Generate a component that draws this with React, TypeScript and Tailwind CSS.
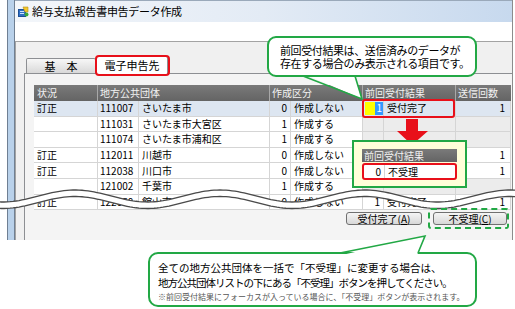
import React from 'react';

const JP = "font-['Noto_Sans_CJK_JP','Noto_Sans',sans-serif]";

type Row = {
  status: string;
  code: string;
  name: string;
  kbn: string;
  kbnLabel: string;
  prev?: string;
  prevLabel?: string;
  count?: string;
  sel?: boolean;
  empty?: boolean;
};

const rows: Row[] = [
  { status: '訂正', code: '111007', name: 'さいたま市', kbn: '0', kbnLabel: '作成しない', prev: '1', prevLabel: '受付完了', count: '1', sel: true },
  { status: '', code: '111031', name: 'さいたま市大宮区', kbn: '1', kbnLabel: '作成する', empty: true },
  { status: '', code: '111074', name: 'さいたま市浦和区', kbn: '1', kbnLabel: '作成する', empty: true },
  { status: '訂正', code: '112011', name: '川越市', kbn: '0', kbnLabel: '作成しない', count: '1' },
  { status: '訂正', code: '112038', name: '川口市', kbn: '0', kbnLabel: '作成しない', count: '1' },
  { status: '', code: '121002', name: '千葉市', kbn: '1', kbnLabel: '作成する', empty: true },
  { status: '訂正', code: '122050', name: '館山市', kbn: '0', kbnLabel: '作成しない', prev: '1', prevLabel: '受付完了', count: '1' },
];

const cell = 'border-r border-b border-[#d5d5d5] flex items-center overflow-hidden whitespace-nowrap';

function AppIcon() {
  return (
    <svg width="11" height="11" viewBox="0 0 11 11">
      <rect x="0.5" y="3.5" width="7" height="7" fill="#2f6fc4" stroke="#1d4f96" />
      <rect x="2" y="5" width="4" height="1" fill="#cfe2ff" />
      <rect x="2" y="7" width="4" height="1" fill="#cfe2ff" />
      <path d="M5 1 L10 1 L10 6 L7 6 Z" fill="#f3c62a" stroke="#b8901a" strokeWidth="0.6" />
      <circle cx="8.5" cy="8.5" r="2" fill="#39a83c" />
    </svg>
  );
}

function wavePath(offset: number) {
  const pts: string[] = [];
  for (let x = -2; x <= 517; x += 3) {
    const y = 196 + offset - 6 * Math.cos((2 * Math.PI * (x - 75)) / 145);
    pts.push(`${x},${y.toFixed(2)}`);
  }
  return pts;
}

function Overlay() {
  const top = wavePath(0);
  const bot = wavePath(6.5);
  const band = `M${top.join(' L')} L${[...bot].reverse().join(' L')} Z`;
  return (
    <svg className="absolute left-0 top-0 pointer-events-none" width="515" height="309" viewBox="0 0 515 309">
      {/* torn line */}
      <path d={band} fill="#ffffff" />
      <polyline points={top.join(' ')} fill="none" stroke="#4a4a4a" strokeWidth="1.3" />
      <polyline points={bot.join(' ')} fill="none" stroke="#4a4a4a" strokeWidth="1.3" />
      {/* red arrow */}
      <path d="M406 119 H418 V131 H428 L412 145 L397 131 H406 Z" fill="#e8101a" />
      {/* top callout tail */}
      <polygon points="304,74 362,99 354,74" fill="#ffffff" />
      <polyline points="303,76 362,99 355,76" fill="none" stroke="#22a845" strokeWidth="1.6" />
      {/* bottom callout tail */}
      <polygon points="342,255 425,236 417,255" fill="#ffffff" />
      <polyline points="340,253 425,236 418,253" fill="none" stroke="#22a845" strokeWidth="1.6" />
    </svg>
  );
}

export default function App() {
  return (
    <div className={`relative w-[515px] h-[309px] overflow-hidden bg-white text-black ${JP}`}>
      {/* window */}
      <div className="flex h-[240px] pl-[7px] pr-[2px]">
        <div className="w-[8px] border-x border-[#6f7f92] bg-[#b9d1ea]" />
        <div className="flex-1 flex flex-col min-w-0 border-r border-[#8c8c8c]">
          <div className="h-[22px] flex items-center gap-[3px] pl-[3px] border-t border-[#9aa9ba] bg-linear-to-r from-[#f3f6fa] via-[#e3ebf5] to-[#c7d9ee]">
            <AppIcon />
            <span className="text-[11px] leading-none tracking-[-0.3px]">給与支払報告書申告データ作成</span>
          </div>
          <div className="h-[19px] bg-white" />
          <div className="flex-1 flex flex-col bg-[#f0f0f0] border-t border-l border-[#a3a3a3] pl-[8px] min-h-0">
            {/* tabs */}
            <div className="h-[31px] flex items-end pl-[2px]">
              <div className="w-[70px] h-[15px] flex items-center justify-center border border-b-0 border-[#8d8f93] rounded-t-[2px] bg-linear-to-b from-[#f7f7f7] to-[#d9d9d9] text-[11px] leading-none">
                基　本
              </div>
              <div className="w-[72px] h-[18px] -mb-px relative flex items-center justify-center border border-b-0 border-[#8d8f93] rounded-t-[2px] bg-white text-[11px] leading-none">
                電子申告先
              </div>
            </div>
            <div className="flex-1 flex flex-col border-t border-l border-[#8d8f93] bg-[#f4f4f4] pl-[9px] pt-[11px] min-h-0">
              {/* table */}
              <div className="w-[477px] flex flex-col text-[10px] leading-none">
                <div className="h-[16px] grid grid-cols-[64px_172px_93px_93px_55px] bg-linear-to-b from-[#7a7a7a] to-[#646464] text-[#f2f2f2]">
                  <div className="flex items-center pl-[3px] border-r border-[#a8a8a8]">状況</div>
                  <div className="flex items-center pl-[2px] border-r border-[#a8a8a8]">地方公共団体</div>
                  <div className="flex items-center pl-[2px] border-r border-[#a8a8a8]">作成区分</div>
                  <div className="flex items-center pl-[2px] border-r border-[#a8a8a8]">前回受付結果</div>
                  <div className="flex items-center pl-[2px]">送信回数</div>
                </div>
                {rows.map((r) => (
                  <div
                    key={r.code}
                    className={`h-[15.6px] grid grid-cols-[64px_41px_131px_21px_72px_21px_72px_55px] ${r.sel ? 'bg-[#dde6f1]' : 'bg-white'}`}
                  >
                    <div className={`${cell} pl-[3px]`}>{r.status}</div>
                    <div className={`${cell} pl-[2px]`}>{r.code}</div>
                    <div className={`${cell} pl-[3px]`}>{r.name}</div>
                    <div className={`${cell} justify-end pr-[3px]`}>{r.kbn}</div>
                    <div className={`${cell} pl-[3px]`}>{r.kbnLabel}</div>
                    <div className={`${cell} justify-end ${r.empty ? 'bg-[#ececec]' : ''} ${r.sel ? 'pl-[2px] py-[1px]' : 'pr-[3px]'}`}>
                      {r.sel ? (
                        <div className="h-full flex-1 flex items-center justify-end bg-[#ffff00]">
                          <span className="bg-[#3399ff] text-white px-[1px] h-full flex items-center">1</span>
                        </div>
                      ) : (
                        r.prev
                      )}
                    </div>
                    <div className={`${cell} pl-[3px] ${r.empty ? 'bg-[#ececec]' : ''}`}>{r.prevLabel}</div>
                    <div className={`${cell} justify-end pr-[5px] ${r.empty ? 'bg-[#ececec]' : ''}`}>{r.count}</div>
                  </div>
                ))}
              </div>
              {/* buttons */}
              <div className="w-[477px] flex justify-end gap-[11px] pr-[4px] mt-[2px]">
                <button className="w-[76px] h-[13px] flex items-center justify-center border border-[#707070] rounded-[3px] bg-linear-to-b from-[#f5f5f5] to-[#d8d8d8] text-[10px] leading-none">
                  受付完了(<span className="underline">A</span>)
                </button>
                <button className="w-[74px] h-[13px] flex items-center justify-center border border-[#707070] rounded-[3px] bg-linear-to-b from-[#f5f5f5] to-[#d8d8d8] text-[10px] leading-none">
                  不受理(<span className="underline">C</span>)
                </button>
              </div>
            </div>
          </div>
        </div>
      </div>

      {/* bottom callout */}
      <div className="ml-[148px] mt-[12px] w-[329px] h-[55px] border-2 border-[#22a845] rounded-[10px] bg-white pl-[8px] pt-[6px] flex flex-col whitespace-nowrap">
        <div className="text-[10.5px] leading-[15px]">全ての地方公共団体を一括で「不受理」に変更する場合は、</div>
        <div className="text-[10.5px] leading-[15px] tracking-[-1px]">地方公共団体リストの下にある「不受理」ボタンを押してください。</div>
        <div className="text-[8px] leading-[13px] text-[#555555]">※前回受付結果にフォーカスが入っている場合に、「不受理」ボタンが表示されます。</div>
      </div>

      <Overlay />

      {/* red highlight around tab */}
      <div className="absolute left-[95px] top-[55px] w-[75px] h-[21px] border-2 border-[#e8101a] rounded-[4px]" />
      {/* red highlight around first result */}
      <div className="absolute left-[362px] top-[99px] w-[93px] h-[19px] border-2 border-[#e8101a] rounded-[3px]" />

      {/* popup showing changed result */}
      <div className="absolute left-[352px] top-[140px] w-[115px] h-[48px] border-2 border-[#22a845] bg-[#ffffd9] pl-[8px] pt-[7px] text-[10px] leading-none">
        <div className="w-[95px] h-[13px] flex items-center pl-[2px] bg-linear-to-b from-[#7a7a7a] to-[#646464] text-[#f2f2f2]">前回受付結果</div>
        <div className="w-[95px] h-[17px] mt-[1px] grid grid-cols-[21px_74px] bg-white border-2 border-[#e8101a] rounded-[3px]">
          <div className="flex items-center justify-end pr-[3px] border-r border-[#d5d5d5]">0</div>
          <div className="flex items-center pl-[3px]">不受理</div>
        </div>
      </div>

      {/* green dashed highlight around button */}
      <div className="absolute left-[428px] top-[208px] w-[81px] h-[21px] border-2 border-dashed border-[#22a845] rounded-[3px]" />

      {/* top callout */}
      <div className="absolute left-[267px] top-[36px] w-[210px] h-[41px] border-2 border-[#22a845] rounded-[9px] bg-white pl-[11px] pt-[6px] whitespace-nowrap">
        <div className="h-[13px] text-[11px] leading-[13px] tracking-[-0.4px]">前回受付結果は、送信済みのデータが</div>
        <div className="h-[13px] text-[11px] leading-[13px] tracking-[-0.4px]">存在する場合のみ表示される項目です。</div>
      </div>
    </div>
  );
}
